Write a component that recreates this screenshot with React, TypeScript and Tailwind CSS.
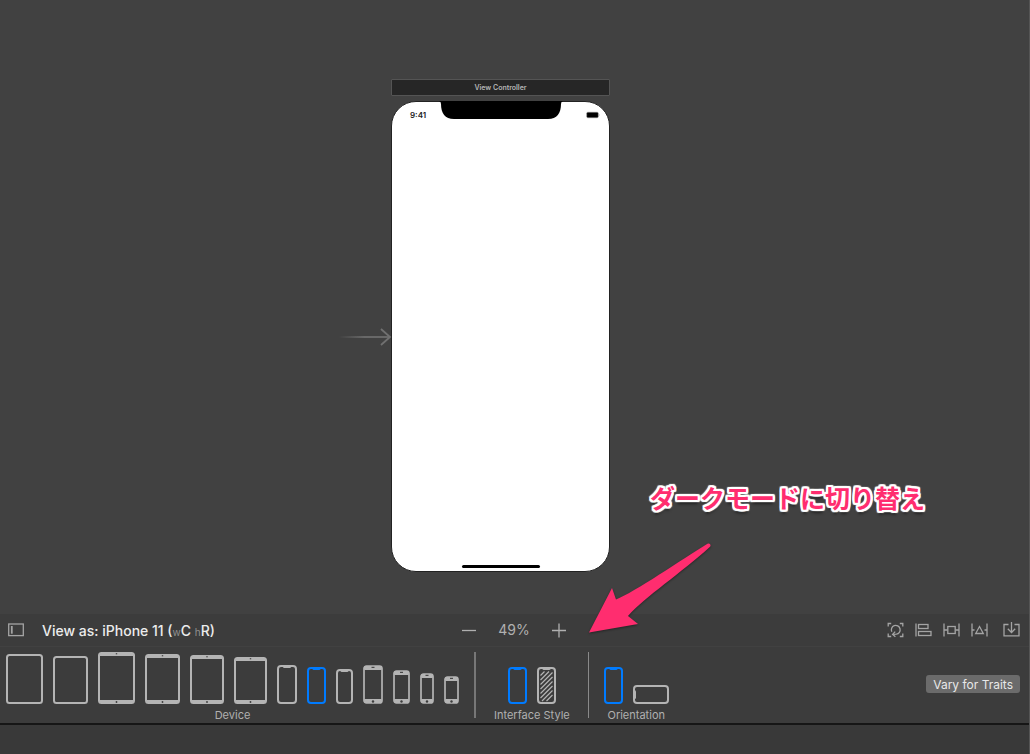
import type { ReactNode } from "react";

type Kind = "slim" | "home" | "notch" | "dark" | "land";

interface Device {
  name: string;
  w: number;
  h: number;
  kind: Kind;
  active?: boolean;
}

const devices: Device[] = [
  { name: "iPad Pro 12.9", w: 37, h: 50, kind: "slim" },
  { name: "iPad Pro 11", w: 35, h: 48, kind: "slim" },
  { name: "iPad Pro 12.9 with Home button", w: 37, h: 52, kind: "home" },
  { name: "iPad Pro 10.5", w: 35, h: 50, kind: "home" },
  { name: "iPad 10.2", w: 34, h: 49, kind: "home" },
  { name: "iPad Pro 9.7", w: 33, h: 47, kind: "home" },
  { name: "iPhone 11 Pro Max", w: 20, h: 39, kind: "notch" },
  { name: "iPhone 11", w: 19, h: 37, kind: "notch", active: true },
  { name: "iPhone 11 Pro", w: 17, h: 35, kind: "notch" },
  { name: "iPhone 8 Plus", w: 20, h: 39, kind: "home" },
  { name: "iPhone 8", w: 17, h: 34, kind: "home" },
  { name: "iPhone SE", w: 14, h: 31, kind: "home" },
  { name: "iPhone 4s", w: 15, h: 28, kind: "home" },
];

const styles: Device[] = [
  { name: "Light", w: 19, h: 37, kind: "notch", active: true },
  { name: "Dark", w: 19, h: 37, kind: "dark" },
];

const orientations: Device[] = [
  { name: "Portrait", w: 19, h: 37, kind: "notch", active: true },
  { name: "Landscape", w: 36, h: 19, kind: "land" },
];

function DeviceButton({ name, w, h, kind, active }: Device) {
  const tablet = w > 30;
  const bar = tablet ? 3 : 4;
  const mid = w / 2;
  return (
    <button
      type="button"
      aria-label={name}
      aria-pressed={!!active}
      className={active ? "text-[#007bff]" : "text-[#b4b4b4]"}
    >
      <svg width={w} height={h} viewBox={`0 0 ${w} ${h}`} fill="none" className="block">
        <rect
          x="1"
          y="1"
          width={w - 2}
          height={h - 2}
          rx={kind === "home" || kind === "slim" ? 2.5 : 3}
          stroke="currentColor"
          strokeWidth={kind === "home" && !tablet ? 1.7 : 2}
        />
        {kind === "home" && (
          <>
            <rect x="1" y="1" width={w - 2} height={bar} rx="1" fill="currentColor" />
            <rect x="1" y={h - 1 - bar} width={w - 2} height={bar} rx="1" fill="currentColor" />
            <rect x={mid - (tablet ? 0.7 : 1.5)} y={tablet ? 1.2 : 1.8} width={tablet ? 1.4 : 3} height="1.1" fill="#3c3c3c" />
            <circle cx={mid} cy={h - (tablet ? 2 : 2.5)} r={tablet ? 0.9 : 1.2} fill="#3c3c3c" />
          </>
        )}
        {(kind === "notch" || kind === "dark") && (
          <path d={`M${mid - 4.5} 1h9q-.4 2-1.6 2h-5.8q-1.2 0-1.6-2z`} fill="currentColor" />
        )}
        {kind === "land" && <path d={`M1 ${mid / 2 - 4}q2 .4 2 1.4v6.6q0 1-2 1.4z`} fill="currentColor" />}
        {kind === "dark" && (
          <path
            d="M3.500 8.500l4-4M3.500 13l8.500-8.500M3.500 17.500l12-12M3.500 22l12-12M3.500 26.500l12-12M3.500 31l12-12M5 34l10.500-10.500M9.500 34l6-6"
            stroke="currentColor"
            strokeWidth="1.2"
          />
        )}
      </svg>
    </button>
  );
}

function Group({ label, items }: { label: string; items: Device[] }) {
  return (
    <div role="group" aria-label={label} className="flex flex-col items-center pt-[5px]">
      <div className="flex h-[52px] items-end gap-[10px]">
        {items.map((d) => (
          <DeviceButton key={d.name} {...d} />
        ))}
      </div>
      <span className="mt-[3px] text-[11px] leading-[16px] whitespace-nowrap text-[#b0b0b0]">{label}</span>
    </div>
  );
}

function Tool({ label, children }: { label: string; children: ReactNode }) {
  return (
    <button type="button" aria-label={label} className="text-[#a4a4a4]">
      <svg width="17" height="16" viewBox="0 0 17 16" fill="none" stroke="currentColor" strokeWidth="1.3" className="block">
        {children}
      </svg>
    </button>
  );
}

export default function App() {
  return (
    <div className="flex min-h-screen flex-col border-r border-[#555555] bg-[#393939] font-['Inter','Noto_Sans_CJK_JP',sans-serif]">
      <main className="relative flex flex-1 justify-center bg-[#414141] pt-[79px] pr-7 pb-[42px]">
        <section className="flex w-[219px] flex-col items-center">
          <h1 className="h-[17px] w-full rounded-[1px] border border-[#545454] bg-[#262626] text-center text-[7px] leading-[15px] font-semibold text-[#b5b5b5]">
            View Controller
          </h1>
          <div className="relative mt-[5px] flex h-[471px] w-[219px] flex-col justify-between rounded-[25px] border border-[#222222] bg-white">
            <div className="flex h-[26px] items-center justify-between pr-[9px] pl-[18px]">
              <span className="text-[8px] leading-[10px] font-semibold text-[#222222]">9:41</span>
              <svg width="14" height="8" viewBox="0 0 14 8" className="block">
                <rect x=".7" y="1.200" width="11.600" height="5.600" rx="1.200" fill="#000" stroke="#999" strokeWidth=".5" />
                <path d="M13 3v2" stroke="#aaa" strokeWidth=".7" />
              </svg>
            </div>
            <svg width="124" height="18" viewBox="0 0 124 18" className="absolute -top-px left-[47px]">
              <path d="M0 0h124q-2 .5-2 3c0 9-4 15-13 15H15C6 18 2 12 2 3Q2 .5 0 0z" fill="#000" />
            </svg>
            <div className="mx-auto mb-[3px] h-[3px] w-[78px] rounded-full bg-black" />
            <svg width="54" height="20" viewBox="0 0 54 20" fill="none" className="absolute top-[225px] -left-[54px]">
              <defs>
                <linearGradient id="entry" x1="0" x2="1">
                  <stop offset="0" stopColor="#686868" stopOpacity="0" />
                  <stop offset=".5" stopColor="#686868" />
                </linearGradient>
              </defs>
              <rect x="1" y="9" width="51" height="2" fill="url(#entry)" />
              <path d="M43 2l9 8-9 8" stroke="#707070" strokeWidth="1.800" />
            </svg>
          </div>
        </section>
        <p className="absolute top-[481px] left-[650px] text-[25px] leading-[36px] font-bold whitespace-nowrap text-[#ff2d6f] [text-shadow:2px_0_white,-2px_0_white,0_2px_white,0_-2px_white,2px_1px_white,2px_-1px_white,-2px_1px_white,-2px_-1px_white,1px_2px_white,-1px_2px_white,1px_-2px_white,-1px_-2px_white,2px_2px_1px_white,-2px_2px_1px_white,2px_-2px_1px_white,-2px_-2px_1px_white,0_4px_3px_rgba(0,0,0,0.5)]">
          ダークモードに切り替え
        </p>
        <svg
          width="126"
          height="94"
          viewBox="0 0 126 94"
          className="absolute top-[541px] left-[587px] z-10 drop-shadow-[0_1px_1px_rgba(0,0,0,0.4)]"
        >
          <path
            d="M2 91.500L25 47l4 11.500C48 51 94 19 120.500 2.800c2-1.200 4 1.200 2.500 3C94 32 58 56 41 75l10 8z"
            fill="#ff2d6f"
          />
        </svg>
      </main>

      <div className="grid h-[33px] grid-cols-[1fr_auto_1fr] items-center border-b border-[#414141] bg-[#3c3c3c] pr-[9px] pl-[8px]">
        <div className="flex items-center gap-[18px]">
          <button type="button" aria-label="Document outline" className="text-[#a4a4a4]">
            <svg width="16" height="14" viewBox="0 0 16 14" fill="none" stroke="currentColor" className="block">
              <rect x=".7" y="1" width="14.600" height="11.600" strokeWidth="1.300" />
              <path d="M3.800 3v7.700" strokeWidth="1.800" />
            </svg>
          </button>
          <button type="button" className="pt-[2px] text-[14px] leading-[20px] font-medium whitespace-nowrap text-[#ececec]">
            View as: iPhone 11 (<span className="text-[10px] font-normal text-[#909090]">w</span>C{" "}
            <span className="text-[10px] font-normal text-[#909090]">h</span>R)
          </button>
        </div>
        <div className="flex items-center gap-[22px] text-[#b0b0b0]">
          <button type="button" aria-label="Zoom out">
            <svg width="14" height="15" viewBox="0 0 14 15" className="block">
              <path d="M0 7.500h14" stroke="currentColor" strokeWidth="1.300" />
            </svg>
          </button>
          <span className="text-[14px] leading-[20px]">49%</span>
          <button type="button" aria-label="Zoom in">
            <svg width="14" height="15" viewBox="0 0 14 15" className="block">
              <path d="M0 7.500h14M7 .5v14" stroke="currentColor" strokeWidth="1.300" />
            </svg>
          </button>
        </div>
        <div className="flex items-center justify-end gap-[11px]">
          <Tool label="Update frames">
            <path d="M1.200 4.500V1.500h3M12.800 1.500h3v3M1.200 11.500v3h3M12.800 14.500h3v-3" />
            <path d="M4.800 9.800A4.400 4.400 0 1 1 9.400 12.200L5.800 12.400M8.200 9.600l-2.600 2.800 2.800 2.300" />
          </Tool>
          <Tool label="Align">
            <path d="M1 1.500v13" />
            <rect x="3.500" y="2.500" width="9.500" height="4" />
            <rect x="3.500" y="9.500" width="12.500" height="4" />
          </Tool>
          <Tool label="Add new constraints">
            <path d="M1 1.500v13M16 1.500v13M1 8h3.500M12.500 8H16" />
            <rect x="4.800" y="4.500" width="7.400" height="7" />
          </Tool>
          <Tool label="Resolve layout issues">
            <path d="M1 1.500v13M16 1.500v13M1 8h2.500M13.500 8H16M8.500 4.500l3.800 7H4.700z" />
          </Tool>
          <div className="ml-[4px] flex">
            <Tool label="Embed in">
              <path d="M5.500 2.500H1v11.300h15V2.500h-4.500M8.500 0v10M4.800 6.800l3.700 3.700 3.700-3.700" />
            </Tool>
          </div>
        </div>
      </div>

      <div className="flex h-[76px] items-start bg-[#3c3c3c] pr-[9px] pl-[6px]">
        <Group label="Device" items={devices} />
        <div className="mt-[5px] ml-[15px] h-[66px] w-[2px] bg-[#777777]" />
        <div className="mx-[18px]">
          <Group label="Interface Style" items={styles} />
        </div>
        <div className="mt-[5px] mr-[15px] h-[66px] w-px bg-[#8a8a8a]" />
        <Group label="Orientation" items={orientations} />
        <button
          type="button"
          className="mt-[28px] ml-auto h-[18px] rounded-[3px] bg-[#6b6b6b] px-[7px] text-[12px] leading-[19px] whitespace-nowrap text-[#e8e8e8]"
        >
          Vary for Traits
        </button>
      </div>
      <footer className="h-[31px] border-t-2 border-[#161616] bg-[#393939]" />
    </div>
  );
}
